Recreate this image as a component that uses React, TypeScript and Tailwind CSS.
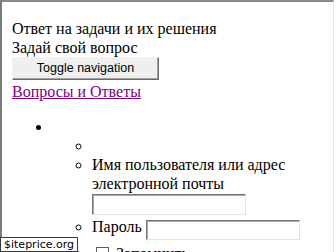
export default function App() {
  return (
    <div className="relative w-[336px] h-[252px] overflow-hidden bg-white">
      <div className="h-full w-[334px] border-t-2 border-l-2 border-r border-t-[#8a8a8a] border-l-[#7a7a7a] border-r-[#e2e2e2] pl-[10px] pt-[17px] text-[16px] leading-[19px] text-black font-['Liberation_Serif',serif]">
        <div>Ответ на задачи и их решения</div>
        <div>Задай свой вопрос</div>
        <button className="block w-[147px] h-[23px] bg-[#efefef] border border-t-[#f4f4f4] border-l-[#f4f4f4] border-r-[#6b6b6b] border-b-[#6b6b6b] shadow-[inset_-1px_-1px_0_#a0a0a0] text-[12.5px] leading-[21px] text-black font-['Liberation_Sans',sans-serif] text-center">
          Toggle navigation
        </button>
        <div className="mt-[2px]">
          <a href="#" className="text-[#800080] underline">
            Вопросы и Ответы
          </a>
        </div>
        <ul className="list-disc pl-10 my-4">
          <li>
            <div>{'\u00a0'}</div>
            <ul className="list-[circle] pl-10">
              <li>{'\u00a0'}</li>
              <li>
                <label>Имя пользователя или адрес электронной почты</label>
                <input
                  type="text"
                  className="block mt-[1px] w-[154px] h-[21px] bg-white border border-t-[#767676] border-l-[#767676] border-r-[#e3e3e3] border-b-[#e3e3e3] shadow-[inset_1px_1px_0_#a8a8a8]"
                />
              </li>
              <li className="mt-[2px]">
                <label>Пароль</label>{' '}
                <input
                  type="password"
                  className="inline-block align-[-3px] w-[154px] h-[20px] bg-white border border-t-[#767676] border-l-[#767676] border-r-[#e3e3e3] border-b-[#e3e3e3] shadow-[inset_1px_1px_0_#a8a8a8]"
                />
              </li>
              <li className="mt-[4px]">
                <input
                  type="checkbox"
                  className="inline-block align-[-1px] ml-[4px] mr-[3px] w-[13px] h-[13px] appearance-none bg-white border border-[#5f5f5f]"
                />{' '}
                <label>Запомнить</label>
              </li>
            </ul>
          </li>
        </ul>
      </div>
      <div className="absolute left-0 bottom-0 h-[15px] px-[3px] bg-white border border-[#3a3a3a] text-[11px] leading-[13px] text-black font-['DejaVu_Sans',sans-serif]">
        $iteprice.org
      </div>
    </div>
  );
}
